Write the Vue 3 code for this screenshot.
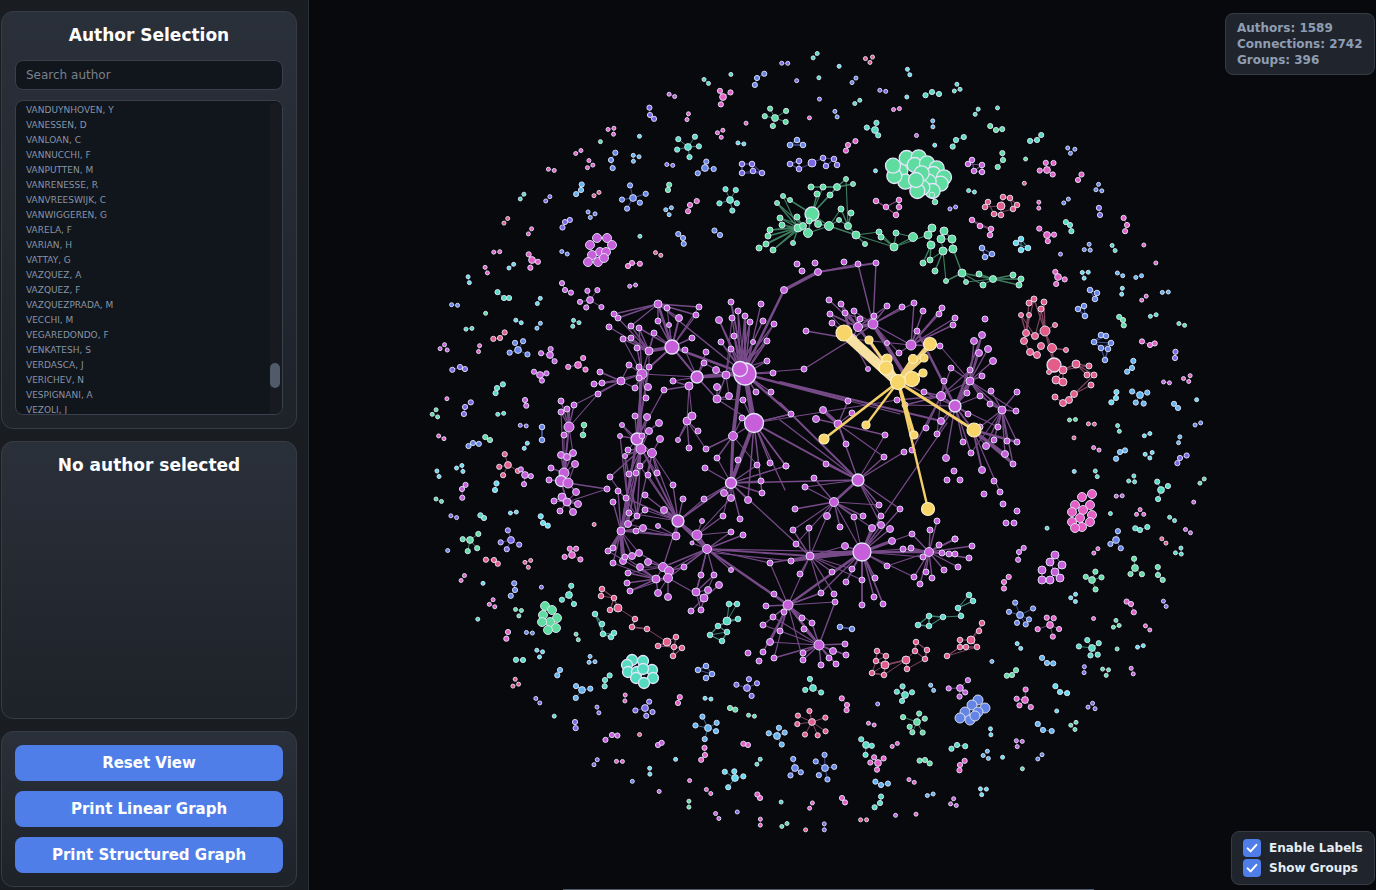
<script setup>
const authors = ['VANDUYNHOVEN, Y','VANESSEN, D','VANLOAN, C','VANNUCCHI, F','VANPUTTEN, M','VANRENESSE, R','VANVREESWIJK, C','VANWIGGEREN, G','VARELA, F','VARIAN, H','VATTAY, G','VAZQUEZ, A','VAZQUEZ, F','VAZQUEZPRADA, M','VECCHI, M','VEGAREDONDO, F','VENKATESH, S','VERDASCA, J','VERICHEV, N','VESPIGNANI, A','VEZOLI, J']

const C = {
  purple: '#c65fd9', green: '#5fdc9f', rose: '#e35d88', pink: '#e35fc4', indigo: '#7b66e6', blue: '#6485e6',
  sky: '#62b4ee', cyan: '#62dcea', teal: '#55dcc0', yellow: '#f8d568'
}
// Edge tones: each group's colour dimmed against the dark canvas.
const E = {
  purple: '#774a88', green: '#3f7f60', rose: '#7f445e', pink: '#7a3f70', indigo: '#4a4392', blue: '#3f5192',
  sky: '#3c6a90', cyan: '#3c8090', teal: '#3a8072'
}

const parse = (s, r0 = 3) => s.trim().split(/\s+/).map(t => { const p = t.split(',').map(Number); return { x: p[0], y: p[1], r: p[2] || r0 } })

const purple = parse(`745,374,11 740,369,7.5 754,423,9.5 733,436,4.5 731,483,5.5 724,493,3.5 731,498,3.5 748,500,3.5 762,493 761,481 757,465 770,463 786,466 795,509 805,487
672,347,7 697,377,6 637,439,6 642,436 641,449,5 652,453,4.5 660,439,3.5 649,431,3.5 659,423,3.5 647,417,3.5 635,416 622,425,2.5 620,436,2.5 628,450 625,456,2.5 640,466 629,474 636,473 648,475 657,473
610,477 607,489 618,491 626,498 613,502 629,513 637,516 645,510 664,510,3.5 678,521,6 645,495 673,485 683,499 704,499 705,468 717,458 738,460 706,449 689,448 678,440,2.5 698,431 687,421,4 692,416,4 742,418 791,414 743,400 717,399,4 729,396,3.5 717,387,3.5 726,375,4 716,370,3.5 689,386,4 664,390 673,381 648,387,3.5 635,388 646,398 642,374,5 639,378 649,367 639,367 629,365 621,381,4 602,383 594,384 598,394 600,372 637,348 649,351,4 623,339 631,338 654,333 639,328 631,326 609,327 618,318 614,314 658,321 658,304,4 667,308 669,325,2.5 679,318,3.5 696,315 699,307 692,338 685,350 706,352 704,363 721,342 731,349 719,320,3.5 732,318 738,311 731,302 745,316 750,322 763,321 774,324 761,304 734,336 753,342,2.5 767,341 806,331 767,361 773,373 756,392 771,392 804,369
852,339,5 858,327,4.5 873,324,5 911,345,5 917,331 874,316 860,319 854,311 845,313 830,314 832,323 841,304 829,300 887,306 902,307 914,303 923,311 939,314 942,308 955,318 953,325 940,346 887,343,2.5 899,353 868,369,2.5 951,368 944,381 924,392 941,396,4.5 955,406,6 897,400 905,405 848,401 823,410,3.5 852,413 816,419,3.5 838,424,4 885,435 846,444 884,457 912,450 904,452 926,428 937,434 941,421,3.5 968,414 980,427 998,427 963,442 971,453 946,458,3.5 954,471 947,480 960,480 982,470,3.5 994,481 984,494 1000,492 1003,504 1017,511 1006,523 1014,523 994,440 986,446,3.5 1007,441 1017,442 1005,454,3.5 1013,464 1002,410,4 1016,411 1017,392 990,404 991,391 980,396 967,393 970,381,4 982,376 970,370 993,361,3.5 988,349,3.5 979,353,3.5 974,341,3.5 982,335,3.5 985,319
858,480,6 834,502,4.5 814,478 786,466 826,464 827,516,3.5 809,528 793,530 840,527 854,517 863,516 879,505 900,509 881,516 881,525,3.5 872,528,3.5 890,529,3.5 912,534 930,530 937,521 955,539
697,535,5 676,536,4 707,549,4.5 621,531,4 628,524,3.5 643,528,3.5 636,531 658,526,2.5 692,543,2 702,521,2.5 723,516 740,519 731,532 743,535 608,551 613,548 613,563 623,561,3.5 625,557 632,556,3.5 639,553,3.5 648,562,3.5 640,567,3.5 663,567,4.5 669,571,4.5 668,578,4.5 656,579,4 684,567 658,593,3.5 668,597,3.5 628,573 627,583 630,591 701,575 714,575 719,585,3.5 708,590,3.5 696,592,4 704,598,4 691,611 701,610 731,570,2.5
770,563 791,561 810,556,4 800,574 796,544 774,594 788,605,5 766,606 773,617 784,612 763,625 780,631 770,642,3.5 763,652 748,653 759,661 774,658 802,618 812,623 804,629 819,645,5 845,644 833,651,3.5 846,655 829,658 803,653 803,660 821,665 836,664
862,552,9 845,546,3.5 832,572 852,569 846,582 862,580 875,578 821,593 834,594 835,602 862,605 874,597 883,604 887,566 892,541,3.5 903,549 911,548 929,552,4.5 939,545 942,553 949,554 955,554 955,539 972,546 969,558 958,567 944,570 923,557 926,572 914,577 932,578 920,584
784,290,3.5 802,271 818,272,3.5 797,264 815,263 844,262 858,264 876,263
561,401 574,405 567,409 561,412 569,427,5 564,435 561,455,3.5 573,453,3.5 567,457,3.5 575,464,3.5 551,468 564,473,5 549,480 561,481,5.5 568,483,5 576,492,3.5 562,497,4 554,501 567,502,4 578,504,3.5 560,511 573,512,3.5`)

const greenMain = parse(`812,214,7 829,226,4.5 808,233,4.5 798,228,4 818,224,3.5 809,221 803,226,3.5 797,217 780,218 782,225 777,203,2.5 790,200,2.5 783,196,2.5 811,187 823,187 817,194 830,195 837,187,3.5 846,179,2.5 853,184,2.5 841,209 851,213 839,220,2.5 848,226,3.5 770,230 768,236 766,244 759,248 773,250 793,243,2.5 856,235,4 865,244,2.5 879,232 881,237 896,233 913,237,4.5 928,235,4 932,228,4 944,231,4 941,239,4 952,239,4 931,245,4 943,251,4 953,249,4 894,247,4 923,263 930,260 935,271 946,281,2.5 962,273,4 966,282,2.5 979,274 983,285 993,279,3.5 1013,275 1021,279 1019,285`)
const greenBubble = [[481,93],[500,54],[536,52],[524,75],[561,70],[590,85],[580,102],[612,112],[602,131],[566,125],[578,153],[547,143],[532,153],[545,100],[496,125],[463,108],[459,77],[528,120]]
  .map(p => ({ x: 740 + p[0] / 3, y: 140 + p[1] / 3, r: 7.5 }))
const redMain = parse(`1034,299 1029,303 1044,302 1041,309 1021,315,2.5 1029,315,2.5 1045,331,5 1055,325,2.5 1026,333,3.5 1024,341,3.5 1035,336,3.5 1041,346,3.5 1030,352,3.5 1037,355,3.5 1052,348,4.5 1066,350,2.5 1054,365,7 1049,372,2.5 1063,370,4 1076,364,4 1089,366 1087,375 1094,375 1091,385 1056,380,4 1063,382,4 1074,394,3.5 1055,397 1069,400,3.5 1063,403,3.5`)

const bubbles = [
  ['purple', 4.5, '590,245 597,238 607,238 612,245 600,252 592,255 606,252 588,262 598,262 604,258'],
  ['pink', 4.5, '1092,494 1082,497 1075,505 1090,505 1083,510 1072,512 1092,515 1080,518 1072,522 1090,522 1082,527 1075,528'],
  ['green', 4.5, '545,606 552,610 543,615 557,618 550,622 542,622 556,628 548,630'],
  ['blue', 5, '978,700 985,708 972,705 965,712 978,712 960,718 970,720 975,716'],
  ['purple', 4, '1055,555 1062,565 1050,562 1042,570 1055,572 1060,578 1050,580 1042,580'],
  ['teal', 5.5, '632,660 643,661 627,665 652,670 628,672 637,672 643,669 636,678 653,678 644,683']
]

const fixedGroups = [
  ['teal', '729,604 737,604 727,621,4 738,619 718,626 727,632 710,635 722,641'],
  ['rose', '602,589 601,596 614,598 610,610 618,608,4 635,619 632,627 647,629 667,642,4 676,637 658,646 674,647 682,648 673,656'],
  ['teal', '595,614 602,624 603,634 611,637 614,633'],
  ['blue', '840,627 852,629'],
  ['teal', '969,595 973,601 958,608 961,616 943,617 929,616 918,625 929,626'],
  ['rose', '877,651 886,656 876,661 885,665,4 872,673 884,675 906,660,4 915,651 916,642 927,650 925,659 907,669'],
  ['rose', '982,623 979,631 971,640,4 960,640 960,647 966,647 977,647 947,656'],
  ['blue', '706,666 698,670 712,674 706,678'],
  ['indigo', '790,164 799,161 799,169 812,163,4 823,158 826,166 834,159 837,165'],
  ['indigo', '742,164 752,164 753,171 742,173 762,173'],
  ['blue', '790,145 803,145 797,140'],
  ['rose', '988,202 985,207 1001,206,4 1003,197 1010,198 1017,205 1013,209 994,214 1001,215'],
  ['purple', '972,160 968,164 982,165 974,171 982,172'],
  ['pink', '876,201 886,207 899,200 899,207 896,215'],
  ['pink', '972,220 980,226 991,229 990,235'],
  ['cyan', '1021,239 1016,243 1028,248 1021,250'],
  ['blue', '982,248 992,254 985,257'],
  ['blue', '1090,290 1097,293 1095,299'],
  ['blue', '1078,309 1084,306 1085,316'],
  ['blue', '1101,335 1106,336 1094,342 1111,343 1101,348 1108,349 1105,360'],
  ['blue', '542,427 542,440'],
  ['green', '584,425 583,435'],
  ['green', '935,202 932,195']
]

const seeds = `blue,757,78,3 pink,723,97,4 indigo,650,115,3 green,775,118,6 pink,848,145,3 teal,875,130,4 teal,932,92,3 teal,956,140,3 green,996,130,3 pink,1047,170,5 green,1003,160,3 teal,688,147,6 blue,705,168,4 blue,611,160,3 blue,633,198,6 sky,581,190,3 green,668,190,2 pink,690,205,3 teal,730,200,6 indigo,565,222,3 pink,532,260,4 blue,683,238,3 blue,720,235,2 pink,632,263,3 purple,590,300,6 purple,565,290,3 teal,504,298,3 rose,500,338,3 blue,518,350,5 purple,550,355,4 indigo,460,367,3 pink,578,365,4 teal,497,388,3 purple,540,375,4 purple,525,400,2 indigo,465,407,3 blue,473,443,3 green,490,440,2 rose,508,465,5 purple,525,475,4 purple,462,489,3 cyan,495,490,2 green,470,540,5 teal,484,518,2 indigo,511,540,5 cyan,543,523,3 rose,494,560,3 pink,572,555,5 blue,515,590,3 teal,569,595,4 teal,523,660,2 pink,508,632,2 sky,560,670,2 sky,582,690,4 teal,605,680,3 indigo,575,722,2 purple,612,735,3 indigo,645,708,5 pink,678,703,2 green,730,708,2 sky,708,728,6 indigo,747,688,5 teal,813,688,4 teal,905,695,5 pink,847,705,3 rose,812,722,8 green,917,722,7 sky,777,736,5 purple,658,745,2 pink,705,755,3 pink,748,745,2 blue,825,768,6 blue,795,768,4 cyan,735,778,5 pink,760,798,2 pink,878,763,5 teal,866,745,4 sky,881,785,3 green,925,760,3 teal,957,745,3 pink,960,765,3 pink,842,798,2 teal,880,803,3 purple,960,688,5 green,1012,675,3 pink,1025,700,5 sky,1043,730,3 cyan,1060,692,3 sky,1047,663,3 teal,1092,648,6 pink,1050,625,6 blue,1020,615,7 pink,1131,604,3 green,1092,580,5 purple,1019,552,3 pink,1004,582,3 blue,1116,540,4 teal,1140,530,3 green,1135,568,4 teal,1161,490,4 green,1158,575,3 sky,1120,452,3 indigo,1180,458,3 sky,1140,395,5 cyan,1116,398,3 sky,1178,408,2 sky,1132,368,3 pink,1150,345,3 indigo,1175,358,2 green,1123,320,3 pink,1058,277,4 pink,1047,235,4 teal,1070,225,3 indigo,1100,215,2 pink,1127,225,3 pink,1078,180,2 teal,1037,140,3`

let seed = 20240611
const rnd = () => { seed = (seed * 1664525 + 1013904223) >>> 0; return seed / 4294967296 }
const edges = []
const nodes = []

function pushNodes(list, color) { list.forEach(n => nodes.push({ ...n, c: C[color] })) }
function link(a, b, color, w = 1) { edges.push({ x1: a.x, y1: a.y, x2: b.x, y2: b.y, c: E[color], w }) }

// Links each node to its nearest larger nodes, as the force layout's stars do.
function linkStars(list, color, hubR, reach) {
  list.forEach((n, i) => {
    if (n.r >= 9) return
    const near = list
      .filter(m => m !== n && m.r >= hubR && m.r >= n.r)
      .map(m => ({ m, d: Math.hypot(m.x - n.x, m.y - n.y) }))
      .filter(o => o.d < reach)
      .sort((a, b) => a.d - b.d)
    near.slice(0, i % 2 === 0 ? 2 : 1).forEach((o, j) => link(n, o.m, color, j === 0 ? 1.4 : 1.1))
  })
}

const heavy = `745,374,754,423,4 741,369,733,436,3 754,423,731,483,3 733,436,731,483,2.5 745,374,672,347,2 745,374,697,377,3 697,377,672,347,1.5 672,347,642,374,1.5 672,347,649,351,3 642,374,637,439,2 640,380,641,449,2 649,367,637,439,1.5 637,439,621,531,2 641,449,628,524,1.5 637,439,678,521,1.5 652,453,678,521,1 621,531,623,561,3 621,531,613,548,2 678,521,707,549,3 697,535,707,549,3 707,549,788,605,2 707,549,810,556,1.5 707,552,791,561,1 707,549,770,563,1 810,556,862,552,4 791,561,862,552,2 707,549,862,552,1 862,552,929,552,2 862,552,892,541,2.5 862,552,872,528,2 862,552,788,605,2 788,605,819,645,2 788,605,770,642,1.5 731,483,678,521,1.5 731,483,810,556,1 754,423,858,480,1.5 731,483,858,480,1.2 858,480,834,502,2 858,480,881,525,1 745,374,848,401,2 745,374,791,414,2 754,423,791,414,1 784,290,745,370,2 784,290,818,272,2.5 818,272,876,263,1.5 818,272,858,264,1 955,406,970,381,3 955,406,982,335,1.5 955,406,917,331,2 955,406,973,430,1.5 898,381,955,406,1 941,396,955,406,1.5 973,430,1005,454,2 973,430,1017,442,2 973,430,1013,464,2 858,327,898,381,2 873,324,905,375,3 845,313,852,339,2 845,313,873,324,1 858,327,873,324,3 745,374,745,316,2 745,374,731,302,1.5 745,374,738,311,1 745,374,761,304,1 745,374,767,341,1 885,513,947,423,1 780,382,941,421,1.5 780,403,858,480,1.5 780,420,858,480,1 823,410,838,424,3 838,424,846,444,1 569,427,564,473,1.5 569,409,569,427,1.5 567,457,564,473,1.5 561,481,567,502,1.5 821,593,788,605,1 900,509,862,552,1 1005,454,1013,464,1 745,374,658,304,1.2 745,374,719,320,1.2 672,347,658,304,2 672,347,679,318,1.5 672,347,639,328,1.2 697,377,689,386,2 697,377,726,375,2 697,377,717,399,1.2 745,374,726,375,2 754,423,717,399,1 672,347,697,377,1.2 637,439,642,374,1.2 664,390,637,439,1 664,510,678,521,3 618,491,626,498,1 626,498,678,521,1.2 610,477,637,516,1 640,466,637,516,1.2 625,456,637,516,1.2 620,436,629,513,1 754,423,785,490,1 754,423,762,493,1.2 754,423,748,500,1.2 745,374,900,414,0.9 754,423,897,400,0.9 1000,492,973,430,1 982,470,973,430,1.5 621,531,640,466,1 628,524,625,456,1 637,516,652,453,1 641,449,621,531,1 678,521,648,475,1 678,521,640,466,1 707,549,663,567,1.2 707,549,669,571,1 707,549,668,578,1 707,549,684,567,1 707,549,701,575,1 707,549,696,592,1 707,549,714,575,1 678,521,663,567,1 637,348,642,374,1 639,328,642,374,1 654,333,642,374,1 658,321,672,347,1 696,315,672,347,1 745,374,750,322,1 745,374,734,336,1 745,374,753,342,1 745,374,721,342,1 862,552,832,572,1 862,552,846,582,1 862,552,862,580,1 862,552,875,578,1 862,552,821,593,1 862,552,862,605,1 862,552,883,604,1 858,327,830,314,1 858,327,841,304,1 873,324,902,307,1 955,406,970,370,1 955,406,967,393,1 955,406,980,396,1`

heavy.split(' ').forEach(t => {
  const p = t.split(',').map(Number)
  edges.push({ x1: p[0], y1: p[1], x2: p[2], y2: p[3], c: E.purple, w: p[4] * 1.25 })
})

linkStars(purple, 'purple', 4, 62)
linkStars(greenMain, 'green', 3.5, 48)
linkStars(redMain, 'rose', 3.5, 40)
pushNodes(purple, 'purple')
pushNodes(greenMain, 'green')
pushNodes(redMain, 'rose')
pushNodes(greenBubble, 'green')

bubbles.forEach(([c, r, s]) => {
  const l = parse(s, r)
  linkStars(l, c, r, 16)
  pushNodes(l, c)
})
fixedGroups.forEach(([c, s]) => {
  const l = parse(s, 2.8)
  l.forEach((n, i) => { if (i) link(n, l[i - 1], c, 1) })
  linkStars(l, c, 2.8, 22)
  pushNodes(l, c)
})

seeds.split(' ').forEach(t => {
  const [c, xs, ys, ns] = t.split(',')
  const cx = +xs, cy = +ys, n = +ns
  const spread = 4 + n * 1.6
  const a0 = rnd() * 6.28
  const l = []
  for (let i = 0; i < n; i++) {
    const a = a0 + i * 2.4
    const d = i === 0 ? 0 : spread * (0.55 + 0.45 * rnd())
    l.push({ x: cx + Math.cos(a) * d, y: cy + Math.sin(a) * d, r: i === 0 && n > 3 ? 3.4 : 2.6 })
  }
  l.slice(1).forEach(m => link(m, l[0], c, 1))
  pushNodes(l, c)
})

// Scattered pairs and single authors in the outer ring.
const palette = ['cyan', 'teal', 'sky', 'blue', 'indigo', 'pink', 'purple', 'green', 'rose', 'cyan', 'teal', 'pink']
const cx0 = 818, cy0 = 444
for (let tries = 0, placed = 0; tries < 4000 && placed < 190; tries++) {
  const rad = 235 + Math.sqrt(rnd()) * 152
  const ang = rnd() * 6.2832
  const x = cx0 + Math.cos(ang) * rad
  const y = cy0 + Math.sin(ang) * rad
  if (nodes.some(n => Math.hypot(n.x - x, n.y - y) < 18)) continue
  const c = palette[Math.floor(rnd() * palette.length)]
  const k = rnd()
  const dir = rnd() * 6.2832
  const a = { x, y, r: 2 }
  const l = [a]
  if (k > 0.25) l.push({ x: x + Math.cos(dir) * 6, y: y + Math.sin(dir) * 6, r: 2 })
  if (k > 0.82) l.push({ x: x + Math.cos(dir + 1.3) * 6, y: y + Math.sin(dir + 1.3) * 6, r: 2 })
  l.slice(1).forEach(m => link(m, a, c, 0.9))
  pushNodes(l, c)
  placed++
}

const hub = { x: 898, y: 382 }
const yellowNodes = parse(`869,340,4 887,359,5 886,368,7 923,373,4 913,359,4.5 924,358,4 930,344,6.5 844,333,8 912,379,7.5 974,430,7 824,439,5 866,425,4 914,435,4 928,509,6.5 898,382,7.5`)
const yellowEdges = [[869,340,3,'#f6d77a'],[887,359,3,'#f8d568'],[886,368,5,'#f6dc8c'],[923,373,2.5,'#f8d568'],[913,359,5,'#f0cf7a'],[924,358,3,'#f0cf7a'],[930,344,5,'#f0cf7a'],[844,333,10,'#f6e0a4'],[912,379,4,'#f8d568'],[974,430,3,'#f4d06a'],[824,439,2.6,'#f4d06a'],[866,425,2.2,'#f4d06a'],[914,435,3.6,'#f4d06a'],[928,509,2.4,'#f4d06a']]
  .map(e => ({ x1: hub.x, y1: hub.y, x2: e[0], y2: e[1], w: e[2], c: e[3] }))
</script>

<template>
  <div class="app">
    <aside class="sidebar">
      <section class="card select-card">
        <h2 class="title">Author Selection</h2>
        <input class="search" type="text" placeholder="Search author" />
        <div class="list-box">
          <ul class="list">
            <li v-for="a in authors" :key="a">{{ a }}</li>
          </ul>
          <div class="track"><div class="thumb"></div></div>
        </div>
      </section>
      <section class="card info-card">
        <h2 class="title">No author selected</h2>
      </section>
      <section class="card actions">
        <button class="btn">Reset View</button>
        <button class="btn">Print Linear Graph</button>
        <button class="btn">Print Structured Graph</button>
      </section>
    </aside>
    <main class="canvas">
      <svg class="graph" width="1067" height="890" viewBox="309 0 1067 890">
        <g fill="none" stroke-linecap="round">
          <line v-for="(e, i) in edges" :key="i" :x1="e.x1" :y1="e.y1" :x2="e.x2" :y2="e.y2" :stroke="e.c" :stroke-width="e.w" />
        </g>
        <g stroke="#e3e6fb">
          <circle v-for="(n, i) in nodes" :key="i" :cx="n.x" :cy="n.y" :r="n.r" :fill="n.c" :stroke-width="n.r > 5 ? 1.3 : 0.9" />
        </g>
        <g fill="none">
          <line v-for="(e, i) in yellowEdges" :key="i" :x1="e.x1" :y1="e.y1" :x2="e.x2" :y2="e.y2" :stroke="e.c" :stroke-width="e.w" />
        </g>
        <g fill="#f8d568" stroke="#fdf1c4">
          <circle v-for="(n, i) in yellowNodes" :key="i" :cx="n.x" :cy="n.y" :r="n.r" stroke-width="1.2" />
        </g>
      </svg>
      <div class="stats">
        <div>Authors: 1589</div>
        <div>Connections: 2742</div>
        <div>Groups: 396</div>
      </div>
      <div class="toggles">
        <label class="toggle">
          <span class="box"><svg width="14" height="14" viewBox="0 0 14 14"><path d="M2.6 7.4 5.6 10.4 11.4 3.8" fill="none" stroke="#fff" stroke-width="2" stroke-linecap="round" stroke-linejoin="round" /></svg></span>
          Enable Labels
        </label>
        <label class="toggle">
          <span class="box"><svg width="14" height="14" viewBox="0 0 14 14"><path d="M2.6 7.4 5.6 10.4 11.4 3.8" fill="none" stroke="#fff" stroke-width="2" stroke-linecap="round" stroke-linejoin="round" /></svg></span>
          Show Groups
        </label>
      </div>
      <div class="hscroll"></div>
    </main>
  </div>
</template>

<style>
html, body { margin: 0; background: #07090d; overflow: hidden; }
</style>

<style scoped>
.app {
  display: flex;
  width: 1376px;
  height: 890px;
  overflow: hidden;
  font-family: "DejaVu Sans", sans-serif;
  background: #07090d;
}
.sidebar {
  box-sizing: border-box;
  width: 309px;
  height: 890px;
  flex: none;
  padding: 11px 11px 3px 1px;
  display: flex;
  flex-direction: column;
  gap: 12px;
  background: #191c21;
  border-right: 1px solid #2b2f36;
}
.card {
  box-sizing: border-box;
  border: 1px solid #363b45;
  border-radius: 12px;
  background: linear-gradient(180deg, #2a303a 0%, #1e2229 100%);
}
.select-card {
  height: 418px;
  padding: 13px;
}
.info-card {
  height: 278px;
  padding: 13px;
}
.actions {
  height: 156px;
  padding: 13px;
  display: flex;
  flex-direction: column;
  gap: 10px;
}
.title {
  margin: 0;
  font-size: 17px;
  line-height: 20px;
  font-weight: 700;
  color: #fff;
  text-align: center;
}
.search {
  display: block;
  box-sizing: border-box;
  width: 268px;
  height: 30px;
  margin-top: 15px;
  padding: 0 10px;
  border: 1px solid #3a404b;
  border-radius: 8px;
  background: #11151c;
  color: #e6edf3;
  font-family: inherit;
  font-size: 12px;
  outline: none;
}
.search::placeholder { color: #7a818c; opacity: 1; }
.list-box {
  position: relative;
  box-sizing: border-box;
  width: 268px;
  height: 315px;
  margin-top: 10px;
  border: 1px solid #3a404b;
  border-radius: 8px;
  background: #11151c;
  overflow: hidden;
}
.list {
  margin: 0;
  padding: 2px 0 0 10px;
  list-style: none;
}
.list li {
  height: 15px;
  line-height: 15px;
  font-size: 9px;
  color: #8794a8;
  white-space: nowrap;
}
.track {
  position: absolute;
  top: 2px;
  right: 0;
  bottom: 0;
  width: 12px;
  background: #171b21;
}
.thumb {
  position: absolute;
  top: 260px;
  left: 0;
  width: 10px;
  height: 25px;
  border-radius: 5px;
  background: #505a69;
}
.btn {
  display: block;
  width: 100%;
  height: 36px;
  flex: none;
  border: 0;
  border-radius: 8px;
  background: #4f7ee8;
  color: #fff;
  font-family: inherit;
  font-size: 15px;
  font-weight: 700;
  padding: 0;
}
.canvas {
  position: relative;
  flex: 1;
  height: 890px;
  overflow: hidden;
}
.graph { display: block; }
.stats {
  position: absolute;
  top: 13px;
  right: 1px;
  box-sizing: border-box;
  width: 150px;
  height: 62px;
  padding: 6px 11px;
  border: 1px solid #363b45;
  border-radius: 8px;
  background: #20252d;
  color: #8f9db3;
  font-size: 12px;
  font-weight: 700;
  line-height: 16px;
  white-space: nowrap;
}
.toggles {
  position: absolute;
  right: 1px;
  bottom: 5px;
  box-sizing: border-box;
  width: 144px;
  height: 54px;
  padding: 7px 11px;
  display: flex;
  flex-direction: column;
  gap: 2px;
  border: 1px solid #363b45;
  border-radius: 8px;
  background: #20252d;
}
.toggle {
  display: flex;
  align-items: center;
  gap: 8px;
  height: 18px;
  color: #e6edf3;
  font-size: 12px;
  font-weight: 700;
  white-space: nowrap;
}
.box {
  display: flex;
  align-items: center;
  justify-content: center;
  width: 18px;
  height: 18px;
  flex: none;
  border-radius: 4px;
  background: #4f7ee8;
}
.hscroll {
  position: absolute;
  left: 254px;
  bottom: 0;
  width: 531px;
  height: 1px;
  background: #4f5866;
}
</style>
